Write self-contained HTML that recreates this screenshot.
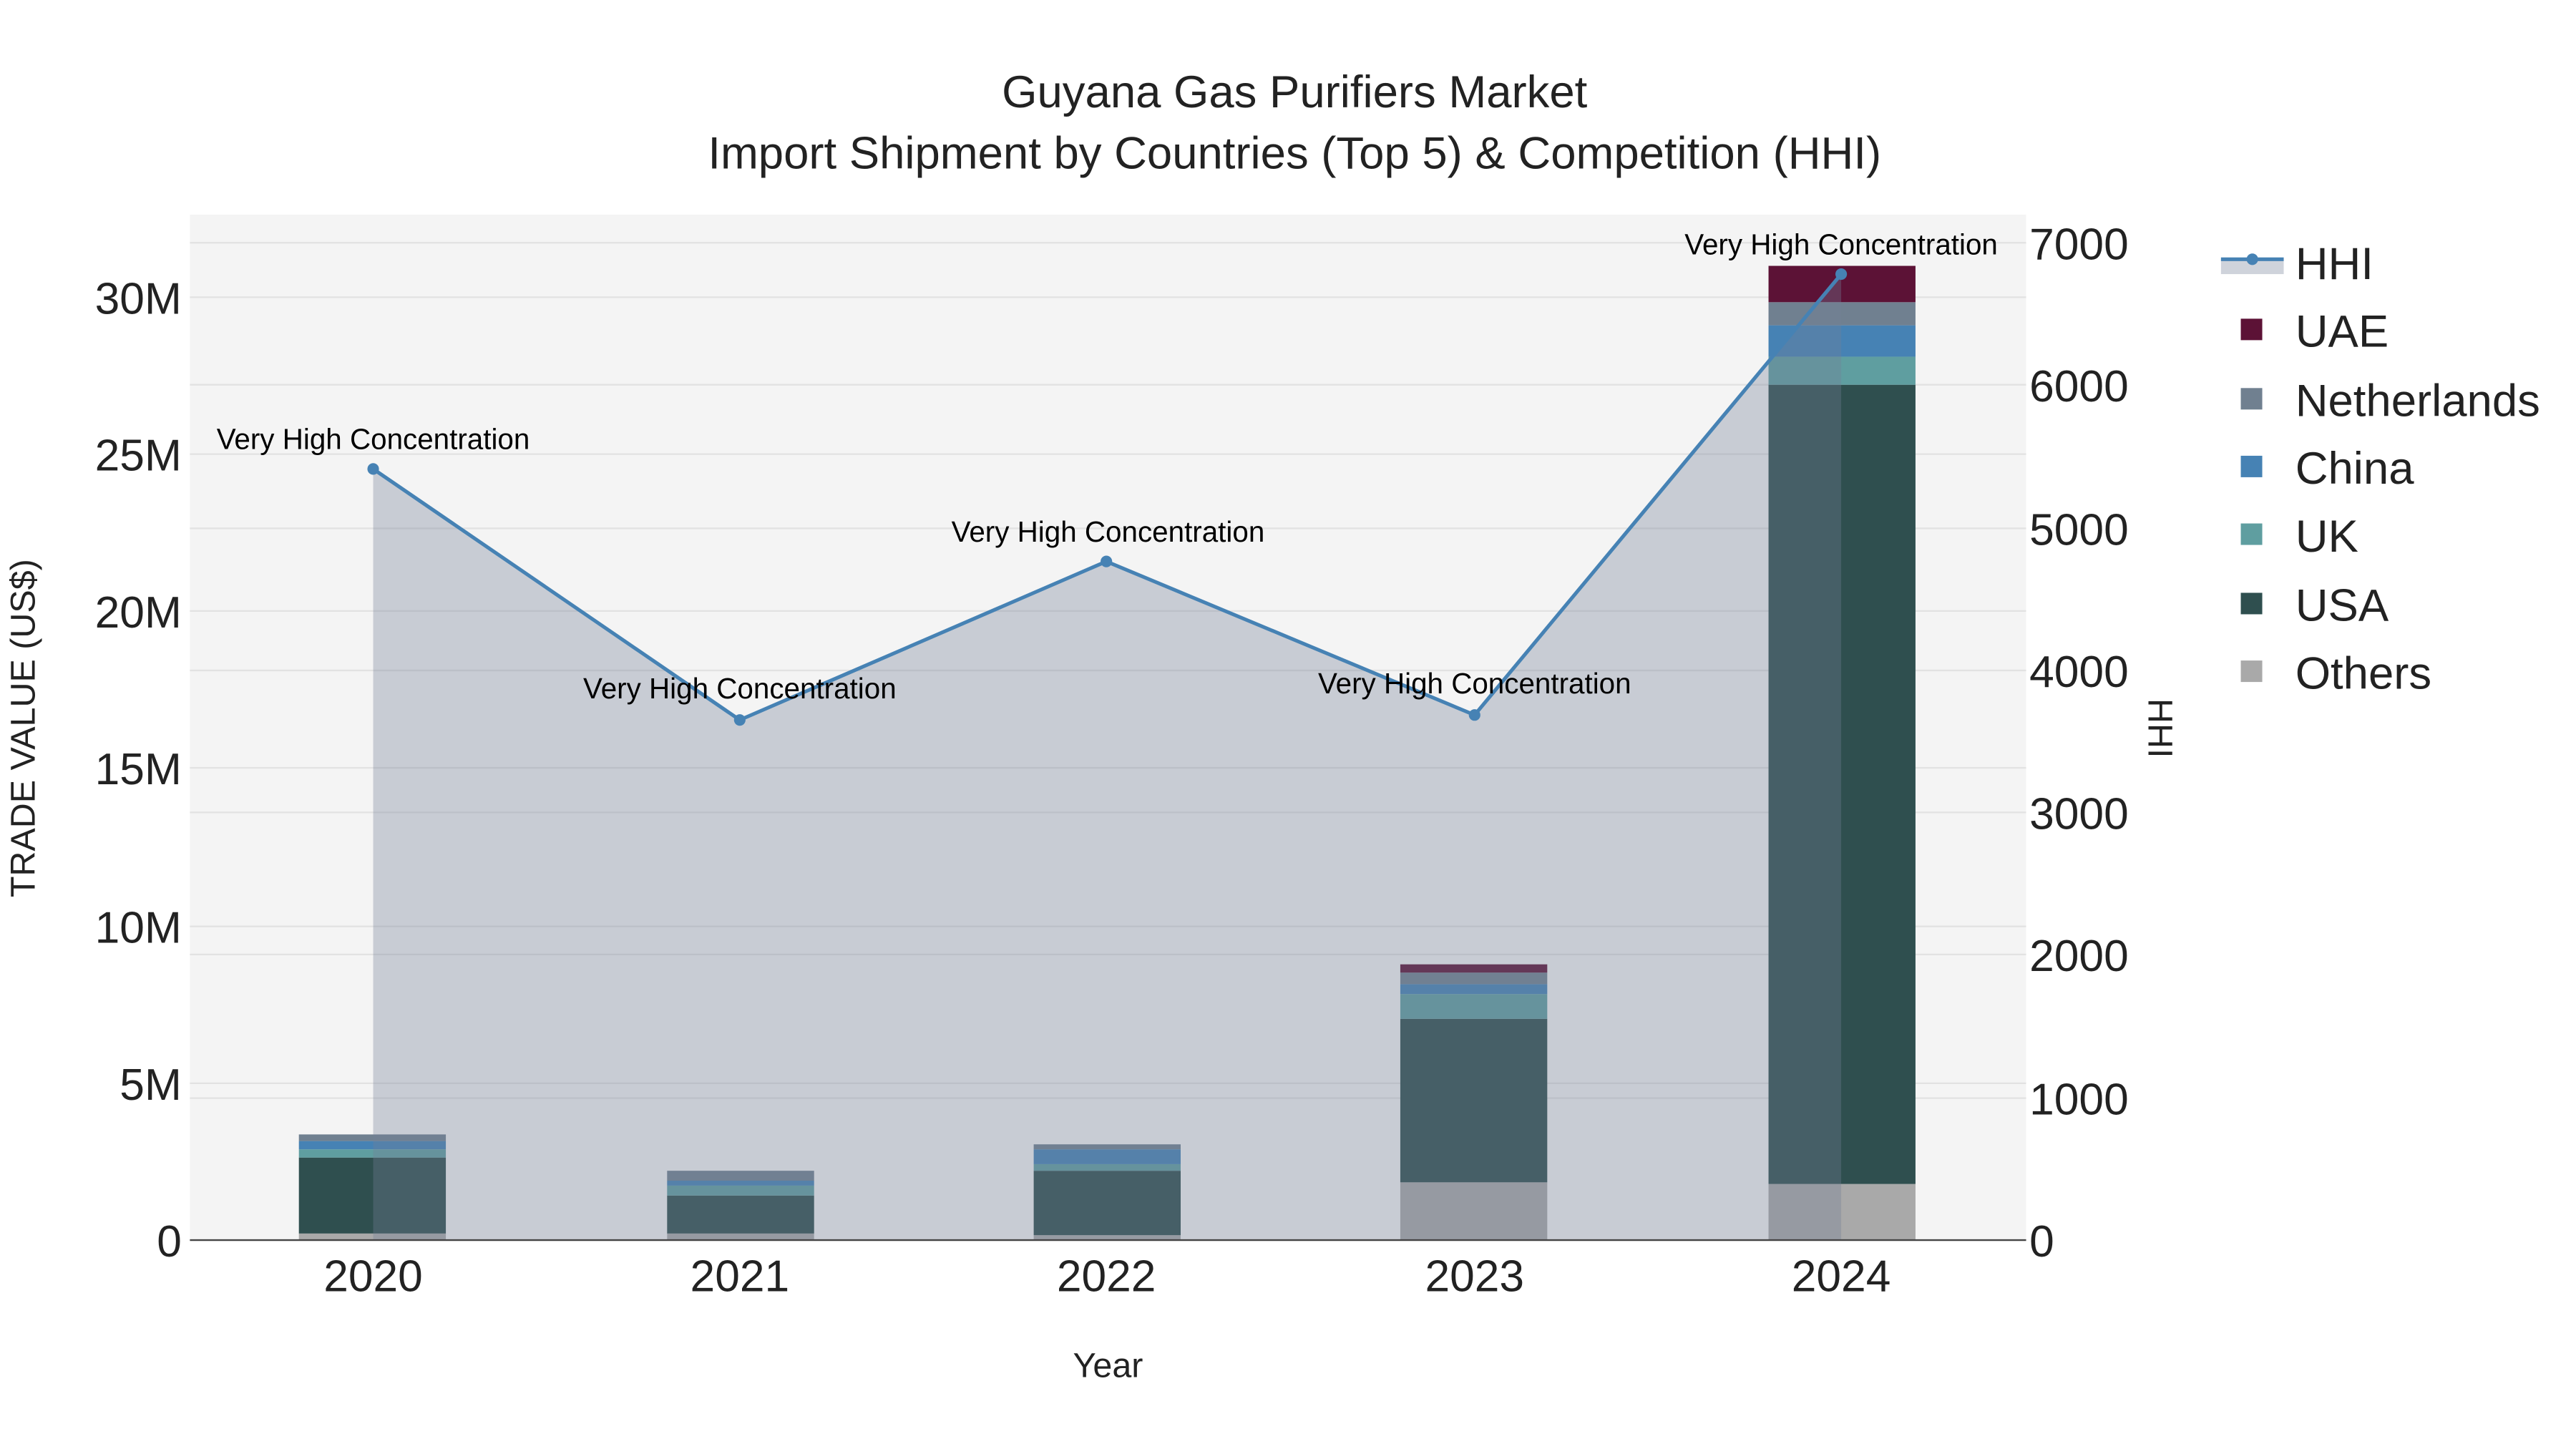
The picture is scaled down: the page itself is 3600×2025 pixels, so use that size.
<!DOCTYPE html>
<html><head><meta charset="utf-8"><style>
html,body{margin:0;padding:0;background:#fff;}
svg{display:block;font-family:"Liberation Sans",Arial,sans-serif;}
</style></head><body>
<svg width="3600" height="2025" viewBox="0 0 1560 877.5" xmlns="http://www.w3.org/2000/svg">
<rect x="0" y="0" width="1560" height="877.5" fill="#fff"/>
<rect x="115" y="130" width="1112" height="621" fill="#f4f4f4"/>
<g stroke="#e2e2e2" stroke-width="1">
<line x1="115" x2="1227" y1="656" y2="656"/><line x1="115" x2="1227" y1="561" y2="561"/>
<line x1="115" x2="1227" y1="465" y2="465"/><line x1="115" x2="1227" y1="370" y2="370"/>
<line x1="115" x2="1227" y1="275" y2="275"/><line x1="115" x2="1227" y1="180" y2="180"/>
<line x1="115" x2="1227" y1="665" y2="665"/><line x1="115" x2="1227" y1="578" y2="578"/>
<line x1="115" x2="1227" y1="492" y2="492"/><line x1="115" x2="1227" y1="406" y2="406"/>
<line x1="115" x2="1227" y1="320" y2="320"/><line x1="115" x2="1227" y1="233" y2="233"/>
<line x1="115" x2="1227" y1="147" y2="147"/>
</g>
<g>
<rect x="181" y="747" width="89" height="4" fill="#a9a9a9"/>
<rect x="181" y="701" width="89" height="46" fill="#2f4f4f"/>
<rect x="181" y="696" width="89" height="5" fill="#5f9ea0"/>
<rect x="181" y="691" width="89" height="5" fill="#4682b4"/>
<rect x="181" y="687" width="89" height="4" fill="#708090"/>

<rect x="404" y="747" width="89" height="4" fill="#a9a9a9"/>
<rect x="404" y="724" width="89" height="23" fill="#2f4f4f"/>
<rect x="404" y="718" width="89" height="6" fill="#5f9ea0"/>
<rect x="404" y="715" width="89" height="3" fill="#4682b4"/>
<rect x="404" y="709" width="89" height="6" fill="#708090"/>

<rect x="626" y="748" width="89" height="3" fill="#a9a9a9"/>
<rect x="626" y="709" width="89" height="39" fill="#2f4f4f"/>
<rect x="626" y="705" width="89" height="4" fill="#5f9ea0"/>
<rect x="626" y="696" width="89" height="9" fill="#4682b4"/>
<rect x="626" y="693" width="89" height="3" fill="#708090"/>

<rect x="848" y="716" width="89" height="35" fill="#a9a9a9"/>
<rect x="848" y="617" width="89" height="99" fill="#2f4f4f"/>
<rect x="848" y="602" width="89" height="15" fill="#5f9ea0"/>
<rect x="848" y="596" width="89" height="6" fill="#4682b4"/>
<rect x="848" y="589" width="89" height="7" fill="#708090"/>
<rect x="848" y="584" width="89" height="5" fill="#5c1236"/>

<rect x="1071" y="717" width="89" height="34" fill="#a9a9a9"/>
<rect x="1071" y="233" width="89" height="484" fill="#2f4f4f"/>
<rect x="1071" y="216" width="89" height="17" fill="#5f9ea0"/>
<rect x="1071" y="197" width="89" height="19" fill="#4682b4"/>
<rect x="1071" y="183" width="89" height="14" fill="#708090"/>
<rect x="1071" y="161" width="89" height="22" fill="#5c1236"/>
</g>
<polygon points="226,751 226,284 448,436 670,340 893,433 1115,166 1115,751" fill="rgba(116,128,151,0.345)"/>
<line x1="115" x2="1227" y1="751" y2="751" stroke="#444" stroke-width="1"/>
<polyline points="226,284 448,436 670,340 893,433 1115,166" fill="none" stroke="#4682b4" stroke-width="2.2"/>
<g fill="#4682b4"><circle cx="226" cy="284" r="3.5"/><circle cx="448" cy="436" r="3.5"/><circle cx="670" cy="340" r="3.5"/><circle cx="893" cy="433" r="3.5"/><circle cx="1115" cy="166" r="3.5"/></g>
<g font-size="17.5" text-anchor="middle" fill="#000">
<text x="226" y="272">Very High Concentration</text>
<text x="448" y="423">Very High Concentration</text>
<text x="671" y="328">Very High Concentration</text>
<text x="893" y="420">Very High Concentration</text>
<text x="1115" y="154">Very High Concentration</text>
</g>
<g font-size="27" text-anchor="end" fill="#222">
<text x="110" y="761">0</text><text x="110" y="666">5M</text><text x="110" y="571">10M</text>
<text x="110" y="475">15M</text><text x="110" y="380">20M</text><text x="110" y="285">25M</text><text x="110" y="190">30M</text>
</g>
<g font-size="27" text-anchor="start" fill="#222">
<text x="1229" y="761">0</text><text x="1229" y="675">1000</text><text x="1229" y="588">2000</text>
<text x="1229" y="502">3000</text><text x="1229" y="416">4000</text><text x="1229" y="330">5000</text>
<text x="1229" y="243">6000</text><text x="1229" y="157">7000</text>
</g>
<g font-size="27" text-anchor="middle" fill="#222">
<text x="226" y="782">2020</text><text x="448" y="782">2021</text><text x="670" y="782">2022</text><text x="893" y="782">2023</text><text x="1115" y="782">2024</text>
</g>
<text x="671" y="834" font-size="21" text-anchor="middle" fill="#222">Year</text>
<text transform="translate(21,441) rotate(-90)" font-size="21" text-anchor="middle" fill="#222">TRADE VALUE (US$)</text>
<text transform="translate(1301,441) rotate(90)" font-size="21" text-anchor="middle" fill="#222">HHI</text>
<g font-size="27.5" text-anchor="middle" fill="#222">
<text x="784" y="65">Guyana Gas Purifiers Market</text>
<text x="784" y="102">Import Shipment by Countries (Top 5) &amp; Competition (HHI)</text>
</g>
<rect x="1345" y="157" width="38" height="9" fill="rgba(116,128,151,0.345)"/>
<line x1="1345" x2="1383" y1="157" y2="157" stroke="#4682b4" stroke-width="2.2"/>
<circle cx="1364" cy="157" r="3.5" fill="#4682b4"/>
<rect x="1357" y="193" width="13" height="13" fill="#5c1236"/>
<rect x="1357" y="235" width="13" height="13" fill="#708090"/>
<rect x="1357" y="276" width="13" height="13" fill="#4682b4"/>
<rect x="1357" y="317" width="13" height="13" fill="#5f9ea0"/>
<rect x="1357" y="359" width="13" height="13" fill="#2f4f4f"/>
<rect x="1357" y="400" width="13" height="13" fill="#a9a9a9"/>
<g font-size="27.5" fill="#222">
<text x="1390" y="169">HHI</text><text x="1390" y="210">UAE</text><text x="1390" y="252">Netherlands</text>
<text x="1390" y="293">China</text><text x="1390" y="334">UK</text><text x="1390" y="376">USA</text><text x="1390" y="417">Others</text>
</g>
</svg>
</body></html>
